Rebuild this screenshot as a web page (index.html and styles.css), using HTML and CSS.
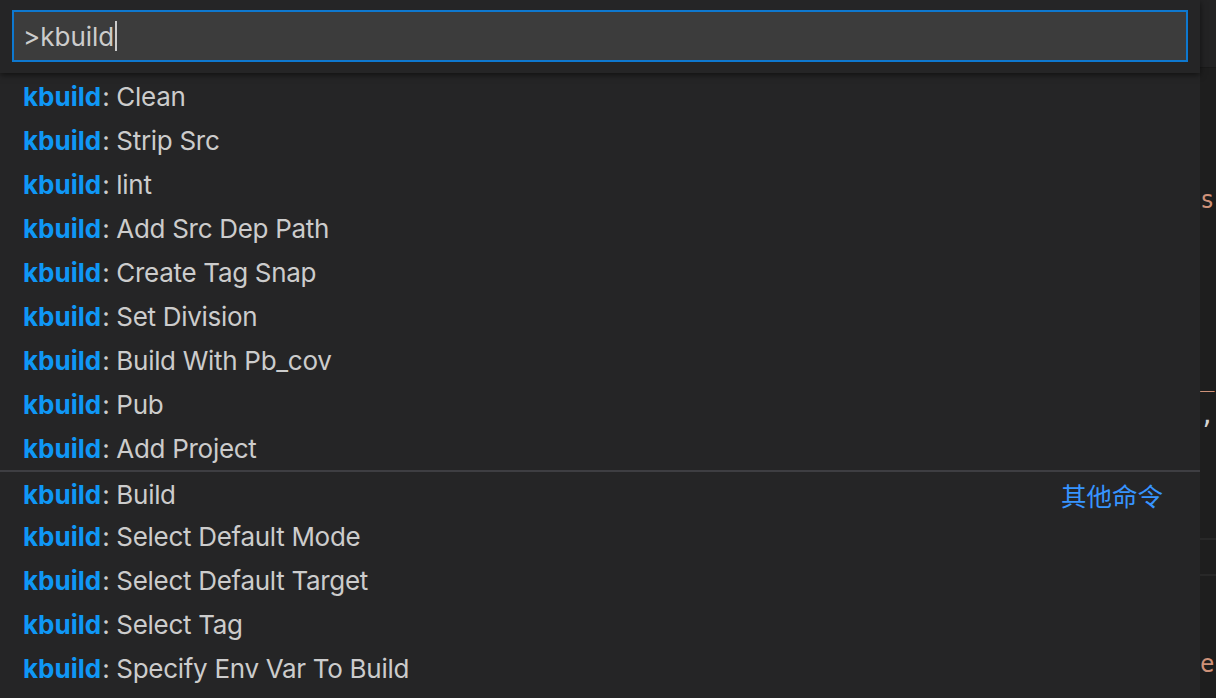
FILE: index.html
```html
<!DOCTYPE html>
<html lang="zh">
<head>
<meta charset="utf-8">
<title>Quick Pick</title>
<link rel="stylesheet" href="styles.css">
</head>
<body>
<div class="window">
  <div class="picker">
    <div class="picker-header">
      <div class="input-box">
        <span class="input-text">&gt;kbuild</span><span class="caret"></span>
      </div>
    </div>
    <div class="list">
      <div class="row"><span class="hl">kbuild</span>: Clean</div>
      <div class="row"><span class="hl">kbuild</span>: Strip Src</div>
      <div class="row"><span class="hl">kbuild</span>: lint</div>
      <div class="row"><span class="hl">kbuild</span>: Add Src Dep Path</div>
      <div class="row"><span class="hl">kbuild</span>: Create Tag Snap</div>
      <div class="row"><span class="hl">kbuild</span>: Set Division</div>
      <div class="row"><span class="hl">kbuild</span>: Build With Pb_cov</div>
      <div class="row"><span class="hl">kbuild</span>: Pub</div>
      <div class="row"><span class="hl">kbuild</span>: Add Project</div>
      <div class="row group-start"><span class="label"><span class="hl">kbuild</span>: Build</span><span class="group-label">其他命令</span></div>
      <div class="row"><span class="hl">kbuild</span>: Select Default Mode</div>
      <div class="row"><span class="hl">kbuild</span>: Select Default Target</div>
      <div class="row"><span class="hl">kbuild</span>: Select Tag</div>
      <div class="row"><span class="hl">kbuild</span>: Specify Env Var To Build</div>
    </div>
  </div>
  <div class="editor-strip">
    <div class="tabs"></div>
    <div class="code">
      <div class="line l1"><span class="str">sc</span></div>
      <div class="line l2"><span class="str">_r</span></div>
      <div class="line l3"><span class="punc">,</span></div>
      <div class="line current"></div>
      <div class="line l4"><span class="str">e"</span></div>
    </div>
  </div>
</div>
</body>
</html>
```
FILE: styles.css
```css
* { box-sizing: border-box; }
html, body {
  margin: 0;
  padding: 0;
  width: 1216px;
  height: 698px;
  overflow: hidden;
  background: #1e1e1e;
}
.window {
  display: flex;
  width: 1216px;
  height: 698px;
}
.picker {
  width: 1200px;
  height: 698px;
  background: #252526;
  display: flex;
  flex-direction: column;
  font-family: Inter, "Noto Sans", "Noto Sans CJK SC", sans-serif;
}
.picker-header {
  height: 73px;
  padding: 10px 12px 0 12px;
  background: #252526;
  position: relative;
  z-index: 1;
  box-shadow: 0 2px 6px rgba(0, 0, 0, 0.55);
}
.input-box {
  width: 1176px;
  height: 52px;
  background: #3c3c3c;
  border: 2px solid #0e78cf;
  display: flex;
  align-items: center;
  padding-left: 9px;
}
.input-text {
  color: #cccccc;
  font-size: 26px;
}
.caret {
  display: inline-block;
  width: 2px;
  height: 30px;
  background: #cccccc;
  margin-left: 1px;
}
.list {
  padding-top: 1px;
  display: flex;
  flex-direction: column;
}
.row {
  height: 44px;
  display: flex;
  align-items: center;
  padding-left: 23px;
  padding-right: 37px;
  color: #cccccc;
  font-size: 26px;
  letter-spacing: -0.3px;
  white-space: nowrap;
}
.hl {
  color: #0f97f5;
  font-weight: 700;
  letter-spacing: 0;
  margin-right: 1px;
}
.group-start {
  border-top: 2px solid #3e3e42;
  justify-content: space-between;
  padding-top: 3px;
}
.group-label {
  color: #3794ff;
  font-family: "Noto Sans CJK SC", sans-serif;
  font-size: 25.5px;
  letter-spacing: 0;
}
.editor-strip {
  width: 16px;
  height: 698px;
  background: #1e1e1e;
  display: flex;
  flex-direction: column;
  overflow: hidden;
}
.tabs {
  height: 68px;
  background: #232324;
  border-bottom: 1px solid #1a1a1a;
  flex: none;
}
.code {
  font-family: "DejaVu Sans Mono", "Liberation Mono", monospace;
  font-size: 24px;
  white-space: nowrap;
}
.line {
  height: 36px;
  line-height: 36px;
}
.l1 { margin-top: 114px; }
.l2 { margin-top: 142px; }
.l3 { margin-top: 2px; }
.current {
  margin-top: 104px;
  height: 38px;
  border-top: 2px solid #282828;
  border-bottom: 2px solid #282828;
}
.l4 { margin-top: 70px; }
.str { color: #ce9178; }
.punc { color: #d4d4d4; }
```
